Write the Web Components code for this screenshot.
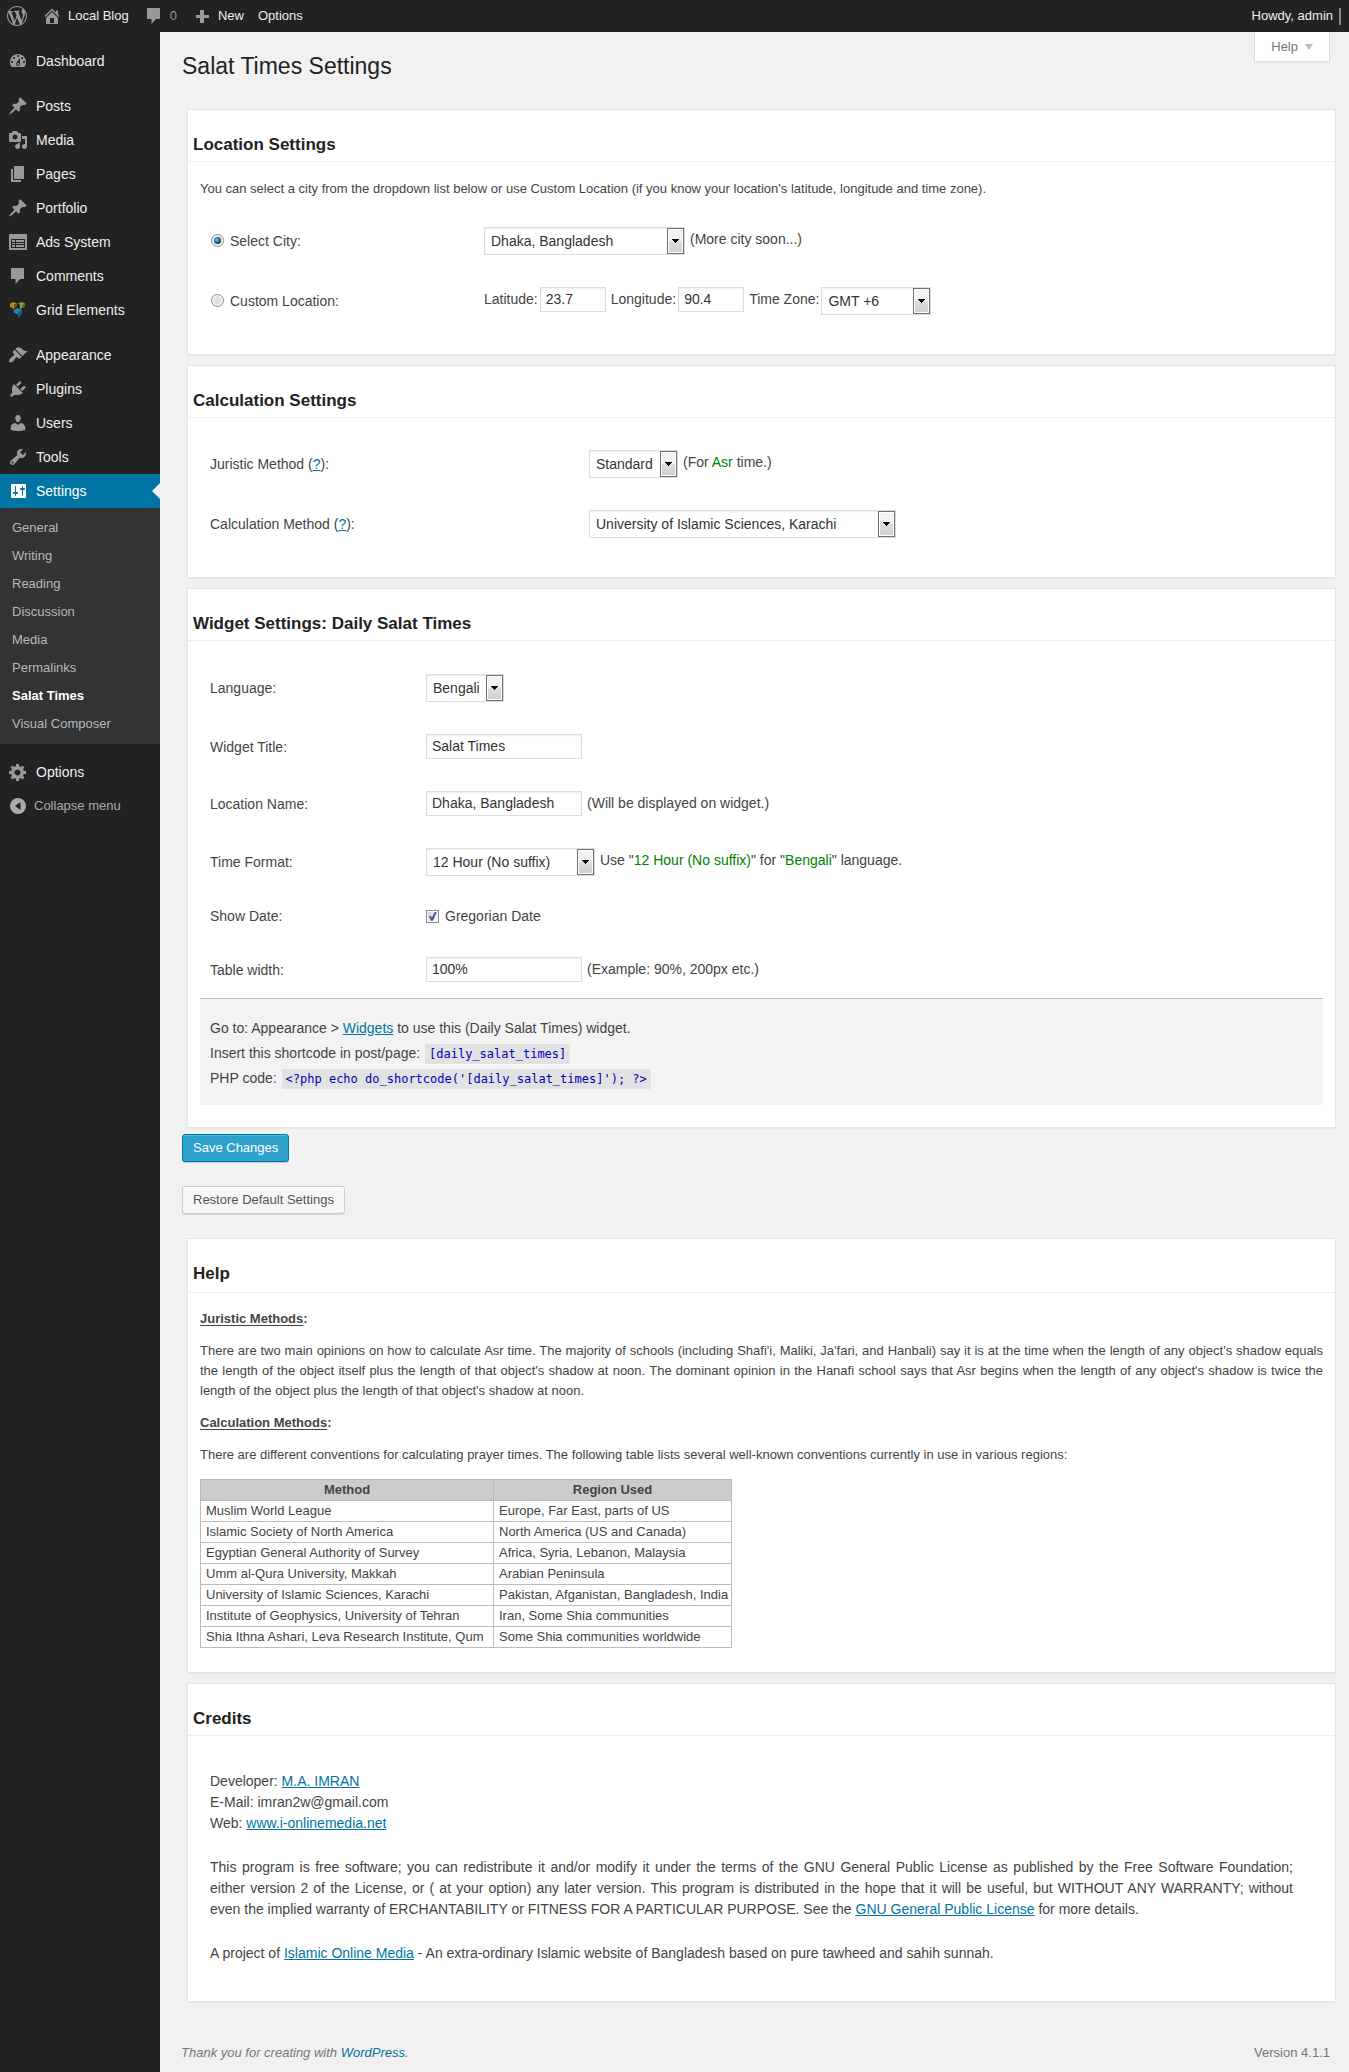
<!DOCTYPE html>
<html lang="en">
<head>
<meta charset="utf-8">
<title>Salat Times Settings</title>
<style>
  html, body { margin: 0; }
  body { background: #f1f1f1; color: #444; font: 14px/20px "Liberation Sans", Arial, sans-serif; }
</style>
</head>
<body>
<admin-page></admin-page>

<template id="t-admin-page">
  <style>
    :host { display: flex; flex-direction: column; min-height: 100vh; }
    .cols { display: flex; flex: 1; }
    admin-menu { flex: 0 0 160px; }
    main { flex: 1; min-width: 0; }
  </style>
  <admin-bar></admin-bar>
  <div class="cols">
    <admin-menu></admin-menu>
    <main><settings-page></settings-page></main>
  </div>
</template>

<template id="t-admin-bar">
  <style>
    :host { display: flex; align-items: center; justify-content: space-between; height: 32px; background: #222; color: #eee; font-size: 13px; }
    nav { display: flex; align-items: center; }
    a { display: flex; align-items: center; color: inherit; text-decoration: none; height: 32px; }
    dash-icon { color: #999; }
    .logo { padding: 0 7px; }
    .site { padding: 0 8px; gap: 6px; }
    .count { padding: 0 8px 0 7px; gap: 6px; color: #999; }
    .new, .opt { padding: 0 7px; gap: 6px; }
    .me { padding: 0 8px 0 0; gap: 6px; }
    .me i { width: 2px; height: 17px; background: #888; }
  </style>
  <nav aria-label="Toolbar">
    <a class="logo" href="#" aria-label="About WordPress"><dash-icon name="wordpress"></dash-icon></a>
    <a class="site" href="#"><dash-icon name="home"></dash-icon>Local Blog</a>
    <a class="count" href="#"><dash-icon name="comments"></dash-icon>0</a>
    <a class="new" href="#"><dash-icon name="plus"></dash-icon>New</a>
    <a class="opt" href="#">Options</a>
  </nav>
  <a class="me" href="#">Howdy, admin<i></i></a>
</template>

<template id="t-admin-menu">
  <style>
    :host { display: block; background: #222; padding-top: 12px; box-sizing: border-box; }
    .gap { height: 11px; }
    .sub { background: #333; padding: 6px 0; display: flex; flex-direction: column; font-size: 13px; line-height: 28px; }
    .sub a { color: #b4b9be; text-decoration: none; padding: 0 12px; }
    .sub a[aria-current] { color: #fff; font-weight: bold; }
  </style>
  <nav aria-label="Main menu">
    <menu-item icon="dashboard">Dashboard</menu-item>
    <div class="gap"></div>
    <menu-item icon="post">Posts</menu-item>
    <menu-item icon="media">Media</menu-item>
    <menu-item icon="page">Pages</menu-item>
    <menu-item icon="post">Portfolio</menu-item>
    <menu-item icon="feedback">Ads System</menu-item>
    <menu-item icon="comments">Comments</menu-item>
    <menu-item icon="grid">Grid Elements</menu-item>
    <div class="gap"></div>
    <menu-item icon="appearance">Appearance</menu-item>
    <menu-item icon="plugins">Plugins</menu-item>
    <menu-item icon="users">Users</menu-item>
    <menu-item icon="tools">Tools</menu-item>
    <menu-item icon="settings" current>Settings</menu-item>
    <div class="sub">
      <a href="#">General</a>
      <a href="#">Writing</a>
      <a href="#">Reading</a>
      <a href="#">Discussion</a>
      <a href="#">Media</a>
      <a href="#">Permalinks</a>
      <a href="#" aria-current="page">Salat Times</a>
      <a href="#">Visual Composer</a>
    </div>
    <div class="gap"></div>
    <menu-item icon="generic">Options</menu-item>
    <menu-item icon="collapse" muted>Collapse menu</menu-item>
  </nav>
</template>

<template id="t-menu-item">
  <style>
    :host { display: block; }
    a { display: flex; align-items: center; height: 34px; padding-left: 8px; gap: 8px; color: #eee; text-decoration: none; }
    dash-icon { color: #999; }
    .nib { display: none; }
    :host([current]) a { background: #0074a2; color: #fff; }
    :host([current]) dash-icon { color: #fff; }
    :host([current]) .nib { display: block; margin-left: auto; border: 8px solid transparent; border-left: 0; border-right-color: #f1f1f1; }
    :host([muted]) a { gap: 6px; color: #aaa; font-size: 13px; }
    :host([muted]) dash-icon { color: #aaa; }
  </style>
  <a href="#"><dash-icon></dash-icon><span><slot></slot></span><i class="nib"></i></a>
</template>

<template id="t-settings-panel">
  <style>
    :host { display: block; background: #fff; border: 1px solid #e5e5e5; box-shadow: 0 1px 1px rgba(0,0,0,.04); }
    h3 { margin: 0; padding: 25px 5px var(--head-bottom, 6px); font-size: 17px; line-height: 20px; color: #222; border-bottom: 1px solid #eee; }
    .body { padding: var(--body-pad, 16px 12px 23px); }
  </style>
  <h3></h3>
  <div class="body"><slot></slot></div>
</template>

<template id="t-field-row">
  <style>
    :host { display: grid; grid-template-columns: var(--label-width) 1fr; align-items: center; padding: 16px 10px; }
    .control { display: flex; align-items: flex-start; gap: 5px; line-height: 25px; }
    :host([compact]), :host([compact]) .control { line-height: 17px; }
  </style>
  <slot name="label"></slot>
  <div class="control"><slot></slot></div>
</template>

<template id="t-drop-down">
  <style>
    :host { display: inline-grid; }
    ::slotted(select) {
      grid-area: 1 / 1; appearance: none; box-sizing: border-box; width: 100%; height: 28px; margin: 0;
      padding: 0 20px 0 6px; border: 1px solid #ddd; border-radius: 0; background: #fff;
      box-shadow: inset 0 1px 2px rgba(0,0,0,.07); color: #333; font: inherit;
    }
    .arrow {
      grid-area: 1 / 1; z-index: 1; justify-self: end; align-self: center; pointer-events: none; box-sizing: border-box;
      width: 17px; height: 26px; margin-right: 1px; border: 1px solid #707070;
      box-shadow: inset 0 0 0 1px #fff; background: linear-gradient(#f2f2f2 0 48%, #dedede 50%, #cfcfcf);
      display: grid; place-items: center;
    }
    .arrow svg { display: block; fill: #000; }
  </style>
  <slot></slot>
  <span class="arrow"><svg width="7" height="4" viewBox="0 0 7 4" shape-rendering="crispEdges"><path d="M0 0h7v1H6v1H5v1H4v1H3V3H2V2H1V1H0z"/></svg></span>
</template>

<template id="t-settings-page">
  <style>
    :host { display: block; padding: 0 13px 9px 22px; }
    a { color: #0074a2; }
    header, footer { display: flex; justify-content: space-between; padding-right: 6px; }
    header { height: 77px; align-items: flex-start; }
    h2 { margin: 19px 0 0; font-size: 23px; line-height: 30px; font-weight: 400; color: #222; }
    .help-tab {
      display: flex; align-items: center; gap: 7px; height: 30px; padding: 0 16px; border: 1px solid #ddd; border-top: 0;
      background: #fff; box-shadow: 0 1px 1px rgba(0,0,0,.04); color: #777; font: inherit; font-size: 13px;
    }
    .help-tab i { border: 4px solid transparent; border-top: 6px solid #bbb; border-bottom: 0; }
    .panels { display: flex; flex-direction: column; gap: 10px; margin-left: 5px; }
    .small { font-size: 13px; margin: 0; }
    .place { --label-width: 274px; --body-pad: 17px 12px 23px; }
    .place .small { margin-bottom: 12px; }
    .calc { --label-width: 379px; }
    .widget { --label-width: 216px; --body-pad: 17px 12px 22px; }
    input[type=text] {
      box-sizing: border-box; width: 156px; height: 25px; margin: 0; padding: 0 5px; border: 1px solid #ddd; border-radius: 0;
      background: #fff; box-shadow: inset 0 1px 2px rgba(0,0,0,.07); color: #333; font: inherit;
    }
    input[type=text].num { width: 66px; }
    .pair { display: flex; gap: 2px; }
    .pick { display: flex; align-items: center; gap: 6px; }
    input[type=radio], input[type=checkbox] { appearance: none; box-sizing: border-box; width: 13px; height: 13px; margin: 0; border: 1px solid #8a8a8a; display: grid; place-items: center; }
    input[type=radio] { border-radius: 50%; background: radial-gradient(#e0e0e0 0 40%, #fff 75%); margin: 0 0 2px 1px; }
    input[type=radio]:checked::before { content: ""; width: 7px; height: 7px; border-radius: 50%; background: radial-gradient(circle at 40% 40%, #6fd0f5, #1a6c9c 45%, #0b2c45 80%); }
    input[type=checkbox] { background: linear-gradient(135deg, #cfd3da, #f6f6f6); box-shadow: inset 0 0 0 1px #fff; }
    input[type=checkbox]:checked::before { content: ""; width: 9px; height: 9px; background: #3c4f96; clip-path: polygon(10% 48%, 30% 42%, 42% 66%, 76% 0, 96% 2%, 52% 96%, 34% 96%); }
    em { font-style: normal; color: #008000; }
    .w201 { width: 201px; } .w110 { width: 110px; } .w89 { width: 89px; } .w307 { width: 307px; } .w78 { width: 78px; } .w169 { width: 169px; }
    .usage { background: #f3f3f3; border-top: 1px solid #bbb; padding: 17px 10px 14px; line-height: 25px; }
    .usage p { margin: 0; }
    code { font: 12px/15px "DejaVu Sans Mono", monospace; color: #0000bb; background: #e2e2e2; padding: 3px 4px; margin: 0 1px; }
    .actions { display: flex; flex-direction: column; align-items: flex-start; gap: 24px; padding: 6px 0 24px; }
    .btn { height: 28px; padding: 0 10px; border: 1px solid #ccc; border-radius: 3px; background: #f7f7f7; box-shadow: inset 0 1px 0 #fff, 0 1px 0 rgba(0,0,0,.08); color: #555; font: inherit; font-size: 13px; }
    .btn.primary { background: #2ea2cc; border-color: #0074a2; box-shadow: inset 0 1px 0 rgba(120,200,230,.5), 0 1px 0 rgba(0,0,0,.15); color: #fff; }
    .guide { --head-bottom: 8px; --body-pad: 16px 12px 24px; }
    .guide h4 { margin: 0 0 12px; font-size: 13px; }
    .guide h4 u { text-underline-offset: 2px; }
    .guide p { text-align: justify; margin-bottom: 12px; }
    table { border-collapse: collapse; table-layout: fixed; width: 532px; margin-top: 14px; font-size: 13px; }
    th, td { border: 1px solid #bbb; padding: 0 5px; height: 20px; white-space: nowrap; text-align: left; }
    td + td { padding-right: 0; }
    th { background: #ccc; text-align: center; }
    col:first-child { width: 293px; }
    .credits { --body-pad: 35px 42px 37px 22px; line-height: 21px; }
    .credits p { margin: 0 0 23px; text-align: justify; }
    .credits p:last-child { margin: 0; }
    .keep { white-space: nowrap; }
    footer { padding-top: 41px; color: #777; font-size: 13px; margin-left: -1px; }
    footer a { text-decoration: none; }
  </style>

  <header>
    <h2>Salat Times Settings</h2>
    <button class="help-tab" type="button">Help<i></i></button>
  </header>

  <form onsubmit="return false">
    <div class="panels">
      <settings-panel class="place" heading="Location Settings">
        <p class="small">You can select a city from the dropdown list below or use Custom Location (if you know your location's latitude, longitude and time zone).</p>
        <field-row>
          <label slot="label" class="pick"><input type="radio" name="mode" checked>Select City:</label>
          <drop-down class="w201"><select aria-label="City"><option>Dhaka, Bangladesh</option></select></drop-down>
          <span>(More city soon...)</span>
        </field-row>
        <field-row>
          <label slot="label" class="pick"><input type="radio" name="mode">Custom Location:</label>
          <label class="pair">Latitude:<input class="num" type="text" value="23.7"></label>
          <label class="pair">Longitude:<input class="num" type="text" value="90.4"></label>
          <label class="pair">Time Zone:<drop-down class="w110"><select><option>GMT +6</option></select></drop-down></label>
        </field-row>
      </settings-panel>

      <settings-panel class="calc" heading="Calculation Settings">
        <field-row>
          <label slot="label" for="juristic">Juristic Method (<a href="#help">?</a>):</label>
          <drop-down class="w89"><select id="juristic"><option>Standard</option></select></drop-down>
          <span>(For <em>Asr</em> time.)</span>
        </field-row>
        <field-row>
          <label slot="label" for="method">Calculation Method (<a href="#help">?</a>):</label>
          <drop-down class="w307"><select id="method"><option>University of Islamic Sciences, Karachi</option></select></drop-down>
        </field-row>
      </settings-panel>

      <settings-panel class="widget" heading="Widget Settings: Daily Salat Times">
        <field-row>
          <label slot="label" for="lang">Language:</label>
          <drop-down class="w78"><select id="lang"><option>Bengali</option></select></drop-down>
        </field-row>
        <field-row>
          <label slot="label" for="title">Widget Title:</label>
          <input id="title" type="text" value="Salat Times">
        </field-row>
        <field-row>
          <label slot="label" for="locname">Location Name:</label>
          <input id="locname" type="text" value="Dhaka, Bangladesh">
          <span>(Will be displayed on widget.)</span>
        </field-row>
        <field-row>
          <label slot="label" for="format">Time Format:</label>
          <drop-down class="w169"><select id="format"><option>12 Hour (No suffix)</option></select></drop-down>
          <span>Use "<em>12 Hour (No suffix)</em>" for "<em>Bengali</em>" language.</span>
        </field-row>
        <field-row compact>
          <span slot="label">Show Date:</span>
          <label class="pick"><input type="checkbox" checked>Gregorian Date</label>
        </field-row>
        <field-row>
          <label slot="label" for="width">Table width:</label>
          <input id="width" type="text" value="100%">
          <span>(Example: 90%, 200px etc.)</span>
        </field-row>
        <div class="usage">
          <p>Go to: Appearance &gt; <a href="#">Widgets</a> to use this (Daily Salat Times) widget.</p>
          <p>Insert this shortcode in post/page: <code>[daily_salat_times]</code></p>
          <p>PHP code: <code>&lt;?php echo do_shortcode('[daily_salat_times]'); ?&gt;</code></p>
        </div>
      </settings-panel>
    </div>

    <div class="actions">
      <button class="btn primary" type="submit">Save Changes</button>
      <button class="btn" type="reset">Restore Default Settings</button>
    </div>
  </form>

  <div class="panels">
    <settings-panel class="guide" id="help" heading="Help">
      <h4><u>Juristic Methods</u>:</h4>
      <p class="small">There are two main opinions on how to calculate Asr time. The majority of schools (including Shafi'i, Maliki, Ja'fari, and Hanbali) say it is at the time when the length of any object's shadow equals the length of the object itself plus the length of that object's shadow at noon. The dominant opinion in the Hanafi school says that Asr begins when the length of any object's shadow is twice the length of the object plus the length of that object's shadow at noon.</p>
      <h4><u>Calculation Methods</u>:</h4>
      <p class="small">There are different conventions for calculating prayer times. The following table lists several well-known conventions currently in use in various regions:</p>
      <table>
        <colgroup><col><col></colgroup>
        <thead><tr><th>Method</th><th>Region Used</th></tr></thead>
        <tbody>
          <tr><td>Muslim World League</td><td>Europe, Far East, parts of US</td></tr>
          <tr><td>Islamic Society of North America</td><td>North America (US and Canada)</td></tr>
          <tr><td>Egyptian General Authority of Survey</td><td>Africa, Syria, Lebanon, Malaysia</td></tr>
          <tr><td>Umm al-Qura University, Makkah</td><td>Arabian Peninsula</td></tr>
          <tr><td>University of Islamic Sciences, Karachi</td><td>Pakistan, Afganistan, Bangladesh, India</td></tr>
          <tr><td>Institute of Geophysics, University of Tehran</td><td>Iran, Some Shia communities</td></tr>
          <tr><td>Shia Ithna Ashari, Leva Research Institute, Qum</td><td>Some Shia communities worldwide</td></tr>
        </tbody>
      </table>
    </settings-panel>

    <settings-panel class="credits" heading="Credits">
      <p>Developer: <a href="#">M.A. IMRAN</a><br>E-Mail: imran2w@gmail.com<br>Web: <a href="#">www.i-onlinemedia.net</a></p>
      <p>This program is free software; you can redistribute it and/or modify it under the terms of the GNU General Public License as published by the Free Software Foundation; <span class="keep">either version 2</span> of the License, or ( at your option) any later version. This program is distributed in the hope that it will be useful, but WITHOUT ANY WARRANTY; without <span class="keep">even the implied</span> warranty of ERCHANTABILITY or FITNESS FOR A PARTICULAR PURPOSE. See the <a href="#">GNU General Public License</a> for more details.</p>
      <p>A project of <a href="#">Islamic Online Media</a> - An extra-ordinary Islamic website of Bangladesh based on pure tawheed and sahih sunnah.</p>
    </settings-panel>
  </div>

  <footer>
    <i>Thank you for creating with <a href="#">WordPress</a>.</i>
    <span>Version 4.1.1</span>
  </footer>
</template>

<script>
const ICONS = {
  wordpress: '<path d="M20 10c0-5.51-4.49-10-10-10C4.48 0 0 4.49 0 10c0 5.52 4.48 10 10 10 5.51 0 10-4.48 10-10zM7.78 15.37L4.37 6.22c.55-.02 1.17-.08 1.17-.08.5-.06.44-1.13-.06-1.11 0 0-1.45.11-2.37.11-.18 0-.37 0-.58-.01C4.12 2.69 6.87 1.11 10 1.11c2.33 0 4.45.87 6.05 2.34-.68-.11-1.65.39-1.65 1.58 0 .74.45 1.36.9 2.1.35.61.55 1.36.55 2.46 0 1.49-1.4 5-1.4 5l-3.03-8.37c.54-.02.82-.17.82-.17.5-.05.44-1.25-.06-1.22 0 0-1.44.12-2.38.12-.87 0-2.33-.12-2.33-.12-.5-.03-.56 1.2-.06 1.22l.92.08 1.26 3.41zM17.41 10c.24-.64.74-1.87.43-4.25.7 1.29 1.05 2.71 1.05 4.25 0 3.29-1.73 6.24-4.4 7.78.97-2.59 1.94-5.2 2.92-7.78zM6.1 18.09C3.12 16.65 1.11 13.53 1.11 10c0-1.3.23-2.48.72-3.59C3.25 10.3 4.67 14.2 6.1 18.09zm4.03-6.63l2.58 6.98c-.86.29-1.76.45-2.71.45-.79 0-1.57-.11-2.29-.33.81-2.38 1.62-4.74 2.42-7.1z"/>',
  home: '<path d="M16 8.5l1.53 1.53-1.06 1.06L10 4.6l-6.47 6.49-1.06-1.06L10 2.5l4 4v-2h2v4zm-6-2.46l6 5.99V18H4v-5.97zM12 17v-5H8v5h4z"/>',
  comments: '<path d="M4 2h11c.55 0 1 .45 1 1v9c0 .55-.45 1-1 1h-3l-4.5 5v-5H4c-.55 0-1-.45-1-1V3c0-.55.45-1 1-1z"/>',
  plus: '<path d="M8 4h4v5h5v3h-5v5H8v-5H4V9h4z"/>',
  dashboard: '<path d="M3.76 16h12.48c1.1-1.37 1.76-3.11 1.76-5 0-4.42-3.58-8-8-8s-8 3.58-8 8c0 1.89.66 3.63 1.76 5zM10 4c.55 0 1 .45 1 1s-.45 1-1 1-1-.45-1-1 .45-1 1-1zM6 6c.55 0 1 .45 1 1s-.45 1-1 1-1-.45-1-1 .45-1 1-1zm8 0c.55 0 1 .45 1 1s-.45 1-1 1-1-.45-1-1 .45-1 1-1zm-5.37 5.55L12 7v6c0 1.1-.9 2-2 2s-2-.9-2-2c0-.57.24-1.08.63-1.45zM4 10c.55 0 1 .45 1 1s-.45 1-1 1-1-.45-1-1 .45-1 1-1zm12 0c.55 0 1 .45 1 1s-.45 1-1 1-1-.45-1-1 .45-1 1-1zm-5 3c0-.55-.45-1-1-1s-1 .45-1 1 .45 1 1 1 1-.45 1-1z"/>',
  post: '<path d="M10.44 3.02l1.82-1.82 6.36 6.35-1.83 1.82c-1.05-.68-2.48-.57-3.41.36l-.75.75c-.92.93-1.04 2.35-.35 3.41l-1.83 1.82-2.41-2.41-2.8 2.79c-.42.42-3.38 2.71-3.8 2.29s1.86-3.39 2.28-3.81l2.79-2.79L4.1 9.36l1.83-1.82c1.05.69 2.48.57 3.4-.36l.75-.75c.93-.92 1.05-2.35.36-3.41z"/>',
  media: '<path d="M13 11V4c0-.55-.45-1-1-1h-1.67L9 1H5L3.67 3H2c-.55 0-1 .45-1 1v7c0 .55.45 1 1 1h10c.55 0 1-.45 1-1zM7 4.5c1.38 0 2.5 1.12 2.5 2.5S8.38 9.5 7 9.5 4.5 8.38 4.5 7 5.62 4.5 7 4.5zM14 6h5v10.5c0 1.38-1.12 2.5-2.5 2.5S14 17.88 14 16.5s1.12-2.5 2.5-2.5c.17 0 .34.02.5.05V9h-3V6zm-4 8.05V13h2v3.5c0 1.38-1.12 2.5-2.5 2.5S7 17.88 7 16.5 8.12 14 9.5 14c.17 0 .34.02.5.05z"/>',
  page: '<path d="M6 15V2h10v13H6zm-1 1h8v2H3V5h2v11z"/>',
  feedback: '<path d="M2 2h16c.55 0 1 .45 1 1v14c0 .55-.45 1-1 1H2c-.55 0-1-.45-1-1V3c0-.55.45-1 1-1zM3 7v9h14V7zM4 8h3v2H4zM8 8h8v2H8zM4 11h3v1H4zM8 11h8v1H8zM4 13h3v2H4zM8 13h8v2H8z"/>',
  appearance: '<path d="M14.48 11.06L7.41 3.99l1.5-1.5c.5-.56 2.3-.47 3.51.32 1.21.8 1.43 1.28 2.91 2.1 1.18.64 2.45 1.26 4.45.85zm-.71.71L6.7 4.7 4.93 6.47c-.39.39-.39 1.02 0 1.41l1.06 1.06c.39.39.39 1.03 0 1.42-.6.6-1.43 1.11-2.21 1.69-.35.26-.7.53-1.01.84C1.43 14.23.4 16.08 1.4 17.07c.99 1 2.84-.03 4.18-1.36.31-.31.58-.66.85-1.02.57-.78 1.08-1.61 1.69-2.21.39-.39 1.02-.39 1.41 0l1.06 1.06c.39.39 1.02.39 1.41 0z"/>',
  plugins: '<path d="M13.11 4.36L9.87 7.6 8 5.73l3.24-3.24c.35-.34 1.05-.2 1.56.32.52.51.66 1.21.31 1.55zm-8 1.77l.91-1.12 9.01 9.01-1.19.84c-.71.71-2.63 1.16-3.82 1.16H6.14L4.9 17.26c-.59.59-1.54.59-2.12 0-.59-.58-.59-1.53 0-2.12l1.24-1.24v-3.88c0-1.13.4-3.19 1.09-3.89zm7.26 3.97l3.24-3.24c.34-.35 1.04-.21 1.55.31.52.51.66 1.21.31 1.55l-3.24 3.25z"/>',
  users: '<path d="M10 9.25c-2.27 0-2.73-3.44-2.73-3.44C7 4.02 7.82 2 9.97 2c2.16 0 2.98 2.02 2.71 3.81 0 0-.41 3.44-2.68 3.44zm0 2.57L12.72 10c2.39 0 4.52 2.33 4.52 4.53v2.49s-3.65 1.13-7.24 1.13c-3.65 0-7.24-1.13-7.24-1.13v-2.49c0-2.25 1.94-4.48 4.47-4.48z"/>',
  tools: '<path d="M16.68 9.77c-1.34 1.34-3.3 1.67-4.95.99l-5.41 6.52c-.99.99-2.59.99-3.58 0s-.99-2.59 0-3.57l6.52-5.42c-.68-1.65-.35-3.61.99-4.95 1.28-1.28 3.12-1.62 4.72-1.06l-2.89 2.89 2.82 2.82 2.86-2.87c.53 1.58.18 3.39-1.08 4.65zM3.81 16.21c.4.39 1.04.39 1.43 0 .4-.4.4-1.04 0-1.43-.39-.4-1.03-.4-1.43 0-.39.39-.39 1.03 0 1.43z"/>',
  settings: '<path d="M18 16V4c0-.55-.45-1-1-1H4c-.55 0-1 .45-1 1v12c0 .55.45 1 1 1h13c.55 0 1-.45 1-1zM8 11h1c.55 0 1 .45 1 1s-.45 1-1 1H8v1.5c0 .28-.22.5-.5.5s-.5-.22-.5-.5V13H6c-.55 0-1-.45-1-1s.45-1 1-1h1V5.5c0-.28.22-.5.5-.5s.5.22.5.5V11zm6-2h-1c-.55 0-1-.45-1-1s.45-1 1-1h1V5.5c0-.28.22-.5.5-.5s.5.22.5.5V7h1c.55 0 1 .45 1 1s-.45 1-1 1h-1v5.5c0 .28-.22.5-.5.5s-.5-.22-.5-.5V9z"/>',
  generic: '<path d="M18 12h-2.18c-.17.7-.44 1.35-.81 1.93l1.54 1.54-2.1 2.1-1.54-1.54c-.58.36-1.23.63-1.91.79V19H8v-2.18c-.68-.16-1.33-.43-1.91-.79l-1.54 1.54-2.12-2.12 1.54-1.54c-.36-.58-.63-1.23-.79-1.91H1V9.03h2.17c.16-.7.44-1.35.8-1.94L2.43 5.55l2.1-2.1 1.54 1.54c.58-.37 1.24-.64 1.93-.81V2h3v2.18c.68.16 1.33.43 1.91.79l1.54-1.54 2.12 2.12-1.54 1.54c.36.59.64 1.24.8 1.94H18V12zm-8.5 1.5c1.66 0 3-1.34 3-3s-1.34-3-3-3-3 1.34-3 3 1.34 3 3 3z"/>',
  collapse: '<path d="M10 2a8 8 0 100 16 8 8 0 000-16zM12.5 6v8L7 10z"/>',
  grid: '<path fill="#b98220" d="M2 3.500L5.500 2 9 3.500 6 5v4L2 7z"/><path fill="#7d5512" d="M6 5l3-1.500V6L6 9z"/><path fill="#82a33a" d="M10 3.500L13.500 2 17 3.500v3L12 9V5z"/><path fill="#55702a" d="M14 5l3-1.500v3L14 8z"/><path fill="#2486b5" d="M5.500 10L10 8l4 2v3l-4 5v-3.500l-4.500-2z"/><path fill="#175e87" d="M10 12l4-2v3l-4 5z"/>'
};

class TemplateElement extends HTMLElement {
  constructor() {
    super();
    this.attachShadow({ mode: 'open' }).append(
      document.getElementById('t-' + this.localName).content.cloneNode(true));
  }
}

customElements.define('dash-icon', class extends HTMLElement {
  static observedAttributes = ['name'];
  constructor() { super(); this.attachShadow({ mode: 'open' }); }
  attributeChangedCallback(_, __, name) {
    this.shadowRoot.innerHTML = `<style>:host{display:block;width:20px;height:20px}svg{display:block;fill:currentColor;fill-rule:evenodd}</style>
      <svg width="20" height="20" viewBox="0 0 20 20" aria-hidden="true">${ICONS[name] || ''}</svg>`;
  }
});
customElements.define('menu-item', class extends TemplateElement {
  connectedCallback() {
    this.shadowRoot.querySelector('dash-icon').setAttribute('name', this.getAttribute('icon'));
  }
});
customElements.define('settings-panel', class extends TemplateElement {
  connectedCallback() {
    this.shadowRoot.querySelector('h3').textContent = this.getAttribute('heading');
  }
});
for (const name of ['drop-down', 'field-row', 'admin-bar', 'admin-menu', 'settings-page', 'admin-page'])
  customElements.define(name, class extends TemplateElement {});
</script>
</body>
</html>
